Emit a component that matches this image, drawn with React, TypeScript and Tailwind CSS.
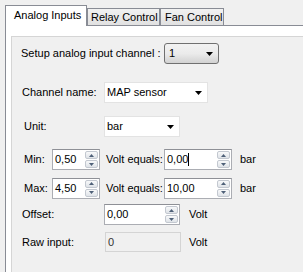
import React from 'react';

const font = { fontFamily: '"Liberation Sans", Arial, sans-serif' };

function Arrow({ className = '' }: { className?: string }) {
  return (
    <svg width="7" height="4" viewBox="0 0 7 4" className={className}>
      <path d="M0 0h7L3.5 4z" fill="#000" />
    </svg>
  );
}

function SpinButtons() {
  return (
    <div className="flex flex-col gap-px h-full py-px pr-px">
      <div className="flex-1 w-[13px] border border-[#c3c8d0] rounded-[2px] bg-gradient-to-b from-[#f8f9fa] to-[#dfe3e8] flex items-center justify-center">
        <svg width="5" height="3" viewBox="0 0 5 3">
          <path d="M2.5 0L5 3H0z" fill="#4e6078" />
        </svg>
      </div>
      <div className="flex-1 w-[13px] border border-[#c3c8d0] rounded-[2px] bg-gradient-to-b from-[#f8f9fa] to-[#dfe3e8] flex items-center justify-center">
        <svg width="5" height="3" viewBox="0 0 5 3">
          <path d="M0 0h5L2.5 3z" fill="#4e6078" />
        </svg>
      </div>
    </div>
  );
}

function Spin({ value, width, caret = false }: { value: string; width: string; caret?: boolean }) {
  return (
    <div className={`${width} h-[21px] border border-[#abadb3] border-t-[#8e9096] bg-white flex items-center justify-between`}>
      <div className="pl-[2px] flex items-center">
        <span>{value}</span>
        {caret && <span className="w-px h-[13px] bg-black" />}
      </div>
      <SpinButtons />
    </div>
  );
}

function Combo({ value, width }: { value: string; width: string }) {
  return (
    <div className={`${width} h-[21px] border border-[#e3e3e3] bg-white flex items-center justify-between pl-[2px] pr-[5px]`}>
      <span>{value}</span>
      <Arrow />
    </div>
  );
}

export default function App() {
  return (
    <div className="w-[303px] h-[272px] overflow-hidden bg-[#f0f0f0] text-[11px] text-black leading-none" style={font}>
      <div className="flex items-end h-[25px] pl-[5px] pt-[5px]">
        <div className="relative z-10 w-[82px] h-[21px] -mb-px border border-b-0 border-[#898c95] bg-white flex items-center pl-[8px] pb-[1px]">
          Analog Inputs
        </div>
        <div className="w-[73px] h-[17px] border border-b-0 border-[#898c95] bg-gradient-to-b from-[#f2f2f2] to-[#e1e1e1] flex items-center pl-[3px]">
          Relay Control
        </div>
        <div className="w-[64px] h-[17px] border border-b-0 border-[#898c95] bg-gradient-to-b from-[#f2f2f2] to-[#e1e1e1] flex items-center pl-[4px]">
          Fan Control
        </div>
      </div>

      <div className="ml-[5px] h-[250px] border-l border-t border-[#898c95] bg-white pl-[5px] pt-[10px]">
        <div className="h-full border-l border-t border-[#d5d5d5] bg-[#f0f0f0] pl-[10px] pt-[6px]">
          <div className="flex items-center h-[21px]">
            <span className="w-[143px] -ml-px">Setup analog input channel :</span>
            <div className="w-[55px] h-[21px] rounded-[3px] border border-[#707070] bg-gradient-to-b from-[#f2f2f2] via-[#ebebeb] to-[#d2d2d2] flex items-center justify-between pl-[4px] pr-[5px]">
              <span>1</span>
              <Arrow />
            </div>
          </div>

          <div className="flex items-center h-[21px] mt-[18px]">
            <span className="w-[82px]">Channel name:</span>
            <Combo value="MAP sensor" width="w-[104px]" />
          </div>

          <div className="flex items-center h-[21px] mt-[13px]">
            <span className="w-[82px] pl-[2px]">Unit:</span>
            <Combo value="bar" width="w-[76px]" />
          </div>

          <div className="flex items-center h-[21px] mt-[12px]">
            <span className="w-[30px] pl-[2px]">Min:</span>
            <Spin value="0,50" width="w-[48px]" />
            <span className="w-[64px] pl-[6px]">Volt equals:</span>
            <Spin value="0,00" width="w-[68px]" caret />
            <span className="pl-[8px]">bar</span>
          </div>

          <div className="flex items-center h-[20px] mt-[8px]">
            <span className="w-[30px] pl-[2px]">Max:</span>
            <Spin value="4,50" width="w-[48px]" />
            <span className="w-[64px] pl-[6px]">Volt equals:</span>
            <Spin value="10,00" width="w-[68px]" />
            <span className="pl-[8px]">bar</span>
          </div>

          <div className="flex items-center h-[21px] mt-[6px]">
            <span className="w-[82px]">Offset:</span>
            <Spin value="0,00" width="w-[76px]" />
            <span className="pl-[9px]">Volt</span>
          </div>

          <div className="flex items-center h-[20px] mt-[7px]">
            <span className="w-[83px]">Raw input:</span>
            <div className="w-[76px] h-[20px] border border-[#d4d4d4] bg-[#f0f0f0] flex items-center pl-[2px] text-[#333]">
              0
            </div>
            <span className="pl-[8px]">Volt</span>
          </div>
        </div>
      </div>
    </div>
  );
}
